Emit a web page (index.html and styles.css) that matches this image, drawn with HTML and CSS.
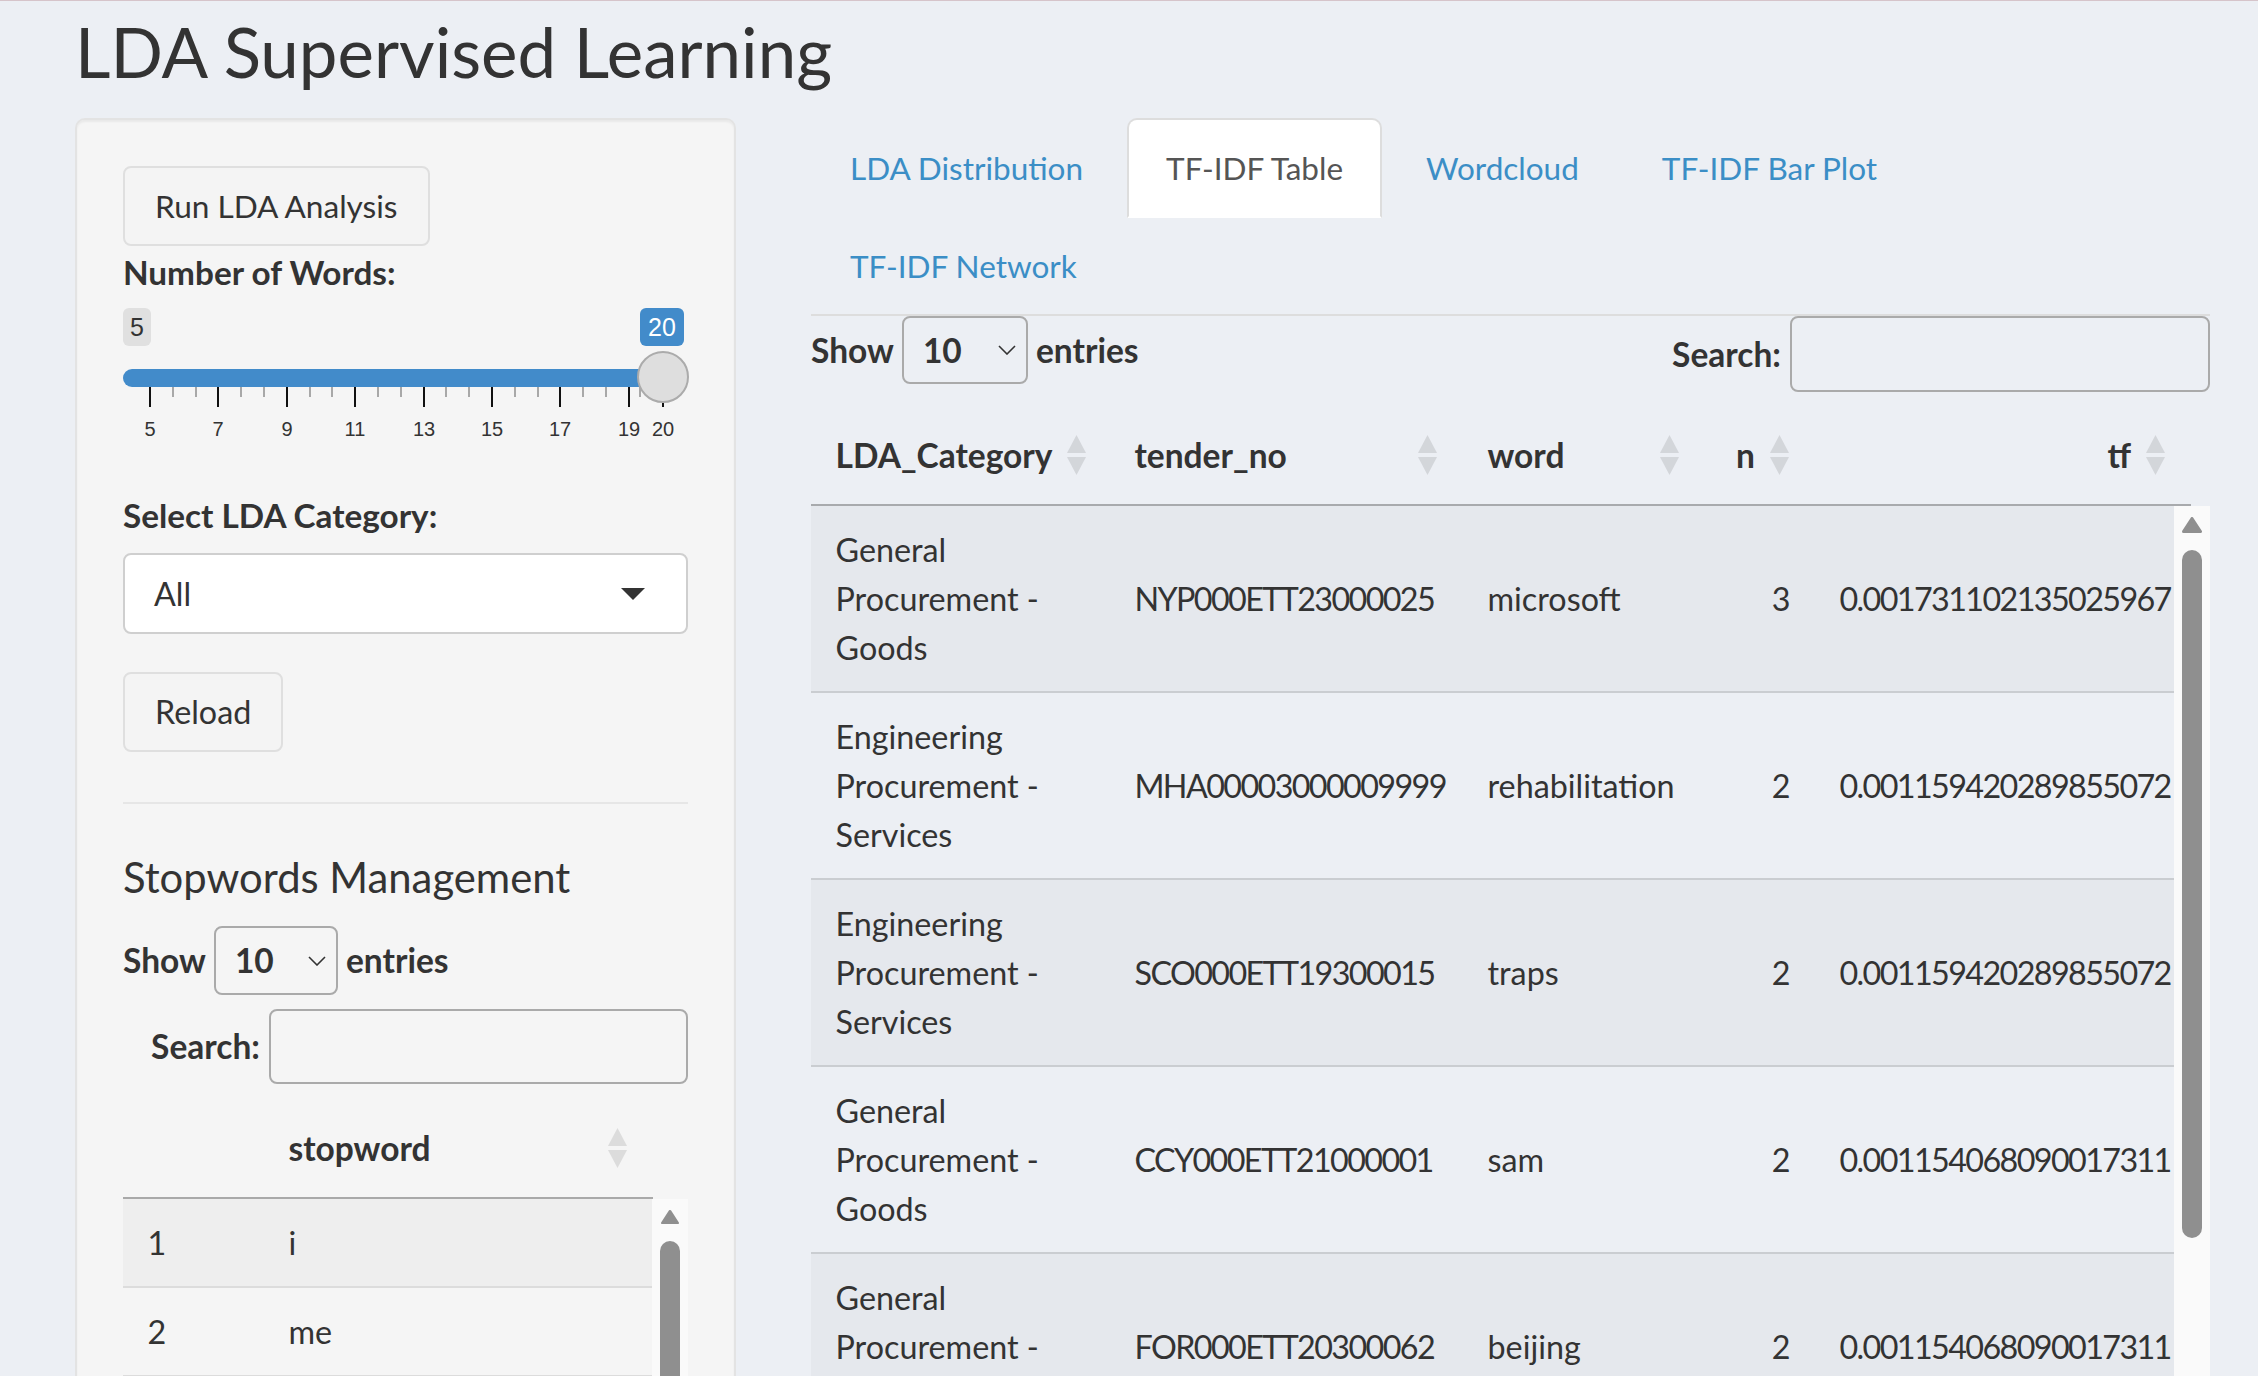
FILE: index.html
```html
<!DOCTYPE html>
<html lang="en">
<head>
<meta charset="utf-8">
<title>LDA Supervised Learning</title>
<link rel="stylesheet" href="styles.css">
</head>
<body>
<h2 class="title">LDA Supervised Learning</h2>
<div class="layout">
  <aside class="sidebar">
    <button class="btn btn-run">Run LDA Analysis</button>
    <label class="ctl-label">Number of Words:</label>
    <div class="slider">
      <span class="irs-min">5</span>
      <span class="irs-max">20</span>
      <div class="irs-bar"></div>
      <span class="tick major" style="left:26px"></span>
      <span class="tick minor" style="left:49px"></span>
      <span class="tick minor" style="left:72px"></span>
      <span class="tick major" style="left:94px"></span>
      <span class="tick minor" style="left:117px"></span>
      <span class="tick minor" style="left:140px"></span>
      <span class="tick major" style="left:163px"></span>
      <span class="tick minor" style="left:186px"></span>
      <span class="tick minor" style="left:208px"></span>
      <span class="tick major" style="left:231px"></span>
      <span class="tick minor" style="left:254px"></span>
      <span class="tick minor" style="left:277px"></span>
      <span class="tick major" style="left:300px"></span>
      <span class="tick minor" style="left:322px"></span>
      <span class="tick minor" style="left:345px"></span>
      <span class="tick major" style="left:368px"></span>
      <span class="tick minor" style="left:391px"></span>
      <span class="tick minor" style="left:414px"></span>
      <span class="tick major" style="left:436px"></span>
      <span class="tick minor" style="left:459px"></span>
      <span class="tick minor" style="left:482px"></span>
      <span class="tick major" style="left:505px"></span>
      <span class="tick minor" style="left:516px"></span>
      <span class="tick minor" style="left:528px"></span>
      <span class="tick major" style="left:539px"></span>
      <span class="tick-label" style="left:27px">5</span>
      <span class="tick-label" style="left:95px">7</span>
      <span class="tick-label" style="left:164px">9</span>
      <span class="tick-label" style="left:232px">11</span>
      <span class="tick-label" style="left:301px">13</span>
      <span class="tick-label" style="left:369px">15</span>
      <span class="tick-label" style="left:437px">17</span>
      <span class="tick-label" style="left:506px">19</span>
      <span class="tick-label" style="left:540px">20</span>
      <span class="irs-handle"></span>
    </div>

    <label class="ctl-label label-select">Select LDA Category:</label>
    <div class="picker"><span>All</span><span class="caret"></span></div>

    <button class="btn">Reload</button>

    <hr class="sep">

    <h4 class="section-title">Stopwords Management</h4>

    <div class="dt-length side-length">
      <span>Show</span>
      <span class="len-select"><span>10</span><svg width="18" height="10" viewBox="0 0 18 10"><polyline points="1,1 9,9 17,1" fill="none" stroke="#333" stroke-width="1.6"/></svg></span>
      <span>entries</span>
    </div>
    <div class="dt-filter side-filter">
      <span>Search:</span>
      <input class="search-input side-input" type="search">
    </div>

    <div class="side-head">
      <table class="dt-table side-table">
        <colgroup><col class="s1"><col class="s2"></colgroup>
        <thead>
          <tr>
            <th></th>
            <th><div class="th-in"><span>stopword</span><svg class="sort" width="19" height="40" viewBox="0 0 19 40"><polygon points="9.5,0 19,18 0,18" fill="#dcdcdc"/><polygon points="0,22 19,22 9.5,40" fill="#dcdcdc"/></svg></div></th>
          </tr>
        </thead>
      </table>
    </div>
    <div class="scroll side-scroll">
      <div class="scroll-body">
        <table class="dt-table side-table striped-side">
          <colgroup><col class="s1"><col class="s2"></colgroup>
          <tbody>
            <tr><td>1</td><td>i</td></tr>
            <tr><td>2</td><td>me</td></tr>
            <tr><td>3</td><td>my</td></tr>
            <tr><td>4</td><td>myself</td></tr>
            <tr><td>5</td><td>we</td></tr>
          </tbody>
        </table>
      </div>
      <div class="vbar">
        <svg class="vbar-arrow" width="20" height="16" viewBox="0 0 20 16"><path d="M10 1.5 L18.5 14.5 L1.5 14.5 Z" fill="#8f8f8f" stroke="#8f8f8f" stroke-width="3" stroke-linejoin="round"/></svg>
        <div class="vbar-thumb side-thumb"></div>
      </div>
    </div>
  </aside>

  <main class="main">
    <ul class="tabs">
      <li><a href="#">LDA Distribution</a></li>
      <li class="active"><a href="#">TF-IDF Table</a></li>
      <li><a href="#">Wordcloud</a></li>
      <li><a href="#">TF-IDF Bar Plot</a></li>
      <li class="break"></li>
      <li><a href="#">TF-IDF Network</a></li>
    </ul>

    <div class="dt-top">
      <div class="dt-length">
        <span>Show</span>
        <span class="len-select"><span>10</span><svg width="18" height="10" viewBox="0 0 18 10"><polyline points="1,1 9,9 17,1" fill="none" stroke="#333" stroke-width="1.6"/></svg></span>
        <span>entries</span>
      </div>
      <div class="dt-filter">
        <span>Search:</span>
        <input class="search-input main-input" type="search">
      </div>
    </div>

    <div class="main-head">
      <table class="dt-table main-table">
        <colgroup><col class="c1"><col class="c2"><col class="c3"><col class="c4"><col class="c5"></colgroup>
        <thead>
          <tr>
            <th><div class="th-in"><span>LDA_Category</span><svg class="sort" width="19" height="40" viewBox="0 0 19 40"><polygon points="9.5,0 19,18 0,18" fill="#d3d6da"/><polygon points="0,22 19,22 9.5,40" fill="#d3d6da"/></svg></div></th>
            <th><div class="th-in"><span>tender_no</span><svg class="sort" width="19" height="40" viewBox="0 0 19 40"><polygon points="9.5,0 19,18 0,18" fill="#d3d6da"/><polygon points="0,22 19,22 9.5,40" fill="#d3d6da"/></svg></div></th>
            <th><div class="th-in"><span>word</span><svg class="sort" width="19" height="40" viewBox="0 0 19 40"><polygon points="9.5,0 19,18 0,18" fill="#d3d6da"/><polygon points="0,22 19,22 9.5,40" fill="#d3d6da"/></svg></div></th>
            <th><div class="th-in right"><span>n</span><svg class="sort" width="19" height="40" viewBox="0 0 19 40"><polygon points="9.5,0 19,18 0,18" fill="#d3d6da"/><polygon points="0,22 19,22 9.5,40" fill="#d3d6da"/></svg></div></th>
            <th><div class="th-in right"><span>tf</span><svg class="sort" width="19" height="40" viewBox="0 0 19 40"><polygon points="9.5,0 19,18 0,18" fill="#d3d6da"/><polygon points="0,22 19,22 9.5,40" fill="#d3d6da"/></svg></div></th>
          </tr>
        </thead>
      </table>
    </div>
    <div class="scroll main-scroll">
      <div class="scroll-body">
        <table class="dt-table main-table striped-main">
          <colgroup><col class="c1"><col class="c2"><col class="c3"><col class="c4"><col class="c5"></colgroup>
          <tbody>
            <tr><td>General Procurement - Goods</td><td class="num">NYP000ETT23000025</td><td>microsoft</td><td class="right">3</td><td class="num">0.001731102135025967</td></tr>
            <tr><td>Engineering Procurement - Services</td><td class="num">MHA00003000009999</td><td>rehabilitation</td><td class="right">2</td><td class="num">0.001159420289855072</td></tr>
            <tr><td>Engineering Procurement - Services</td><td class="num">SCO000ETT19300015</td><td>traps</td><td class="right">2</td><td class="num">0.001159420289855072</td></tr>
            <tr><td>General Procurement - Goods</td><td class="num">CCY000ETT21000001</td><td>sam</td><td class="right">2</td><td class="num">0.001154068090017311</td></tr>
            <tr><td>General Procurement - Goods</td><td class="num">FOR000ETT20300062</td><td>beijing</td><td class="right">2</td><td class="num">0.001154068090017311</td></tr>
          </tbody>
        </table>
      </div>
      <div class="vbar">
        <svg class="vbar-arrow" width="20" height="16" viewBox="0 0 20 16"><path d="M10 1.5 L18.5 14.5 L1.5 14.5 Z" fill="#8f8f8f" stroke="#8f8f8f" stroke-width="3" stroke-linejoin="round"/></svg>
        <div class="vbar-thumb main-thumb"></div>
      </div>
    </div>
  </main>
</div>
</body>
</html>
```

FILE: styles.css
```css
* { box-sizing: border-box; }

html, body { margin: 0; padding: 0; }

body {
  background: #eceff4;
  border-top: 1px solid #d6c4ca;
  font-family: Lato, "Liberation Sans", sans-serif;
  font-size: 32.3px;
  line-height: 49px;
  color: #333;
  height: 1376px;
  overflow: hidden;
}

.title {
  margin: 10px 0 26px 75px;
  font-size: 69px;
  line-height: 81px;
  font-weight: 400;
  color: #333;
}

.layout {
  display: flex;
  align-items: flex-start;
  gap: 75px;
  padding-left: 75px;
}

/* ---------- sidebar ---------- */
.sidebar {
  width: 661px;
  flex: none;
  background: #f5f5f5;
  border: 2px solid #e3e3e3;
  border-radius: 10px;
  box-shadow: inset 0 2px 2px rgba(0, 0, 0, 0.05);
  padding: 46px 46px 0;
  height: 1300px;
  overflow: hidden;
}

.btn {
  display: block;
  width: fit-content;
  font: inherit;
  line-height: 48px;
  color: #333;
  background: #f4f4f4;
  border: 2px solid #dfdfdf;
  border-radius: 8px;
  padding: 14px 30px;
  margin: 0;
}

.btn-run { font-size: 31.6px; }

.ctl-label {
  display: block;
  font-size: 33.3px;
  font-weight: 700;
  margin-top: 2px;
}

.label-select {
  margin-top: 0;
  margin-bottom: 13px;
}

/* slider */
.slider {
  position: relative;
  height: 157px;
  margin-bottom: 37px;
}

.irs-min,
.irs-max {
  position: absolute;
  top: 11px;
  height: 38px;
  border-radius: 6px;
  font-family: "Liberation Sans", Arial, sans-serif;
  font-size: 25px;
  line-height: 38px;
  text-align: center;
}

.irs-min {
  left: 0;
  width: 28px;
  background: #e0e0e0;
  color: #333;
}

.irs-max {
  left: 517px;
  width: 44px;
  background: #428bca;
  color: #fff;
}

.irs-bar {
  position: absolute;
  left: 0;
  top: 72px;
  width: 540px;
  height: 18px;
  border-radius: 9px 0 0 9px;
  background: #428bca;
}

.tick {
  position: absolute;
  top: 90px;
  width: 2px;
}

.tick.major {
  height: 20px;
  background: #111;
}

.tick.minor {
  height: 10px;
  background: #a8a8a8;
}

.tick-label {
  position: absolute;
  top: 120px;
  transform: translateX(-50%);
  font-family: "Liberation Sans", Arial, sans-serif;
  font-size: 20px;
  line-height: 24px;
  color: #333;
}

.irs-handle {
  position: absolute;
  left: 514px;
  top: 54px;
  width: 52px;
  height: 52px;
  border-radius: 50%;
  background: #dedede;
  border: 2px solid #ababab;
}

/* select picker */
.picker {
  display: flex;
  align-items: center;
  justify-content: space-between;
  height: 81px;
  background: #fff;
  border: 2px solid #cfcfcf;
  border-radius: 8px;
  padding: 0 41px 0 29px;
  margin-bottom: 38px;
}

.caret {
  width: 0;
  height: 0;
  border-left: 12px solid transparent;
  border-right: 12px solid transparent;
  border-top: 12px solid #333;
}

.sep {
  border: 0;
  border-top: 2px solid #e6e6e6;
  margin: 50px 0 49px;
}

.section-title {
  font-size: 41.8px;
  line-height: 48.5px;
  font-weight: 400;
  margin: 0 0 24.5px;
}

/* DataTables controls */
.dt-length,
.dt-filter {
  display: flex;
  align-items: center;
  font-size: 33.5px;
  font-weight: 700;
}

.dt-length { gap: 8px; }
.dt-filter { gap: 9px; justify-content: flex-end; }

.len-select {
  display: flex;
  align-items: center;
  justify-content: space-between;
  width: 126px;
  height: 68px;
  border: 2px solid #aaa;
  border-radius: 8px;
  padding: 0 10px 0 19px;
  font-weight: 700;
}

.side-length { margin-bottom: 14px; }
.side-length .len-select { width: 124px; height: 69px; }

.search-input {
  font: inherit;
  background: transparent;
  border: 2px solid #aaa;
  border-radius: 8px;
  margin: 0;
  padding: 0 12px;
}

.side-input { width: 419px; height: 75px; }
.main-input { width: 420px; height: 76px; }

.side-filter { margin-bottom: 15px; }

/* tables */
.dt-table {
  border-collapse: separate;
  border-spacing: 0;
  table-layout: fixed;
}

.dt-table th {
  font-size: 33.5px;
  font-weight: 700;
  text-align: left;
  padding: 24.5px 26px 24.5px 24.5px;
  border-bottom: 2px solid #a8aaad;
}

.dt-table td {
  padding: 19px 24.5px;
  border-bottom: 2px solid #cacdd1;
  vertical-align: middle;
}

.th-in {
  display: flex;
  align-items: center;
  justify-content: space-between;
  gap: 15px;
  white-space: nowrap;
}

.th-in.right { justify-content: flex-end; }

.sort { flex: none; display: block; }

.right { text-align: right; }

.num { letter-spacing: -0.05em; white-space: nowrap; }

.side-table { width: 530px; }
.side-table th { border-bottom-color: #a9a9a9; }
.side-table td { border-bottom-color: #dcdcdc; }
.s1 { width: 141px; }
.s2 { width: 389px; }

.striped-side tr:nth-child(odd) td { background: #eeeeee; }

.main-table { width: 1380px; }
.c1 { width: 299px; }
.c2 { width: 353px; }
.c3 { width: 242px; }
.c4 { width: 110px; }
.c5 { width: 376px; }

.striped-main tr:nth-child(odd) td { background: #e5e8ed; }

.main-head { overflow: hidden; width: 1399px; margin-top: 14px; }

.scroll {
  display: flex;
  align-items: stretch;
}

.scroll-body {
  flex: 1;
  overflow: hidden;
}

.side-scroll { height: 400px; }
.main-scroll { height: 900px; }

.vbar {
  width: 36px;
  flex: none;
  background: #fafafa;
  display: flex;
  flex-direction: column;
  align-items: center;
}

.vbar-arrow { margin-top: 11px; display: block; }

.vbar-thumb {
  width: 20px;
  margin-top: 17px;
  border-radius: 10px;
  background: #8f8f8f;
}

.main-thumb { height: 688px; }
.side-thumb { height: 400px; }

/* ---------- main ---------- */
.main {
  width: 1399px;
  flex: none;
}

.tabs {
  display: flex;
  flex-wrap: wrap;
  list-style: none;
  margin: 0;
  padding: 0;
  border-bottom: 2px solid #dddddd;
  font-size: 31.5px;
}

.tabs li { margin: 0 5px -2px 0; }

.tabs a {
  display: block;
  padding: 23.5px 37px;
  line-height: 49px;
  border: 2px solid transparent;
  border-radius: 10px 10px 0 0;
  color: #3b8ec6;
  text-decoration: none;
}

.tabs li.active a {
  background: #fff;
  border-color: #dddddd #dddddd transparent;
  color: #555;
}

.tabs li.break {
  flex-basis: 100%;
  height: 0;
  margin: 0;
}

.dt-top {
  display: flex;
  justify-content: space-between;
  align-items: flex-start;
}
```
